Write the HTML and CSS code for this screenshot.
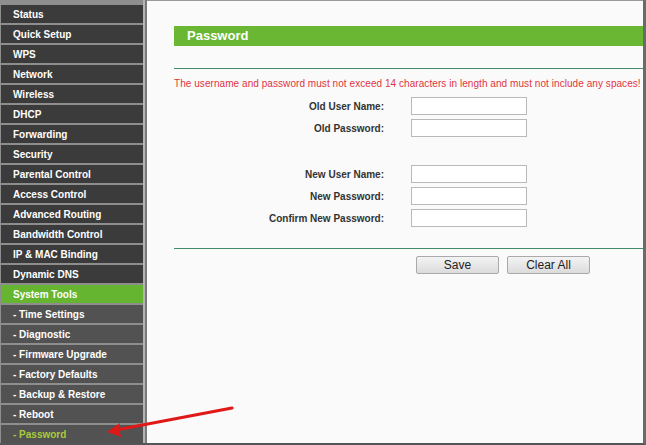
FILE: index.html
```html
<!DOCTYPE html>
<html lang="en">
  <head>
    <meta charset="UTF-8" />
    <title>Password</title>
    <link rel="stylesheet" href="styles.css">
  </head>
  <body>
    <div class="frame">
      <ul class="menu">
        <li class="item">Status</li>
        <li class="item">Quick Setup</li>
        <li class="item">WPS</li>
        <li class="item">Network</li>
        <li class="item">Wireless</li>
        <li class="item">DHCP</li>
        <li class="item">Forwarding</li>
        <li class="item">Security</li>
        <li class="item">Parental Control</li>
        <li class="item">Access Control</li>
        <li class="item">Advanced Routing</li>
        <li class="item">Bandwidth Control</li>
        <li class="item">IP &amp; MAC Binding</li>
        <li class="item">Dynamic DNS</li>
        <li class="item active">System Tools</li>
        <li class="item sub">- Time Settings</li>
        <li class="item sub">- Diagnostic</li>
        <li class="item sub">- Firmware Upgrade</li>
        <li class="item sub">- Factory Defaults</li>
        <li class="item sub">- Backup &amp; Restore</li>
        <li class="item sub">- Reboot</li>
        <li class="item sub current">- Password</li>
      </ul>

      <div class="main">
        <div class="title-bar">Password</div>
        <div class="rule"></div>
        <p class="warning">The username and password must not exceed 14 characters in length and must not include any spaces!</p>

        <div class="form">
          <label class="label">Old User Name:</label>
          <input class="field" type="text">
          <label class="label">Old Password:</label>
          <input class="field" type="password">
          <div class="spacer"></div>
          <label class="label">New User Name:</label>
          <input class="field" type="text">
          <label class="label">New Password:</label>
          <input class="field" type="password">
          <label class="label">Confirm New Password:</label>
          <input class="field" type="password">
        </div>

        <div class="rule rule-bottom"></div>
        <div class="buttons">
          <button class="btn">Save</button>
          <button class="btn">Clear All</button>
        </div>
      </div>

      <svg class="arrow" width="646" height="445" viewBox="0 0 646 445">
        <path d="M232 408 L116 430" stroke="#e01818" stroke-width="3.2" stroke-linecap="round" fill="none"/>
        <path d="M107 432 L120 423 L118 430 L122 437 Z" fill="#e01818"/>
      </svg>
    </div>
  </body>
</html>
```

FILE: styles.css
```css
* {
  margin: 0;
  padding: 0;
  box-sizing: border-box;
}

body {
  background: #fafafa;
  font-family: "Liberation Sans", Arial, sans-serif;
}

.frame {
  position: relative;
  width: 646px;
  height: 445px;
  display: flex;
  overflow: hidden;
  border-bottom: 2px solid #555;
  border-right: 3px solid #6a6a6a;
}

.menu {
  list-style: none;
  width: 147px;
  flex-shrink: 0;
  background: #8e8e8e;
  padding: 5px 0 0 1px;
  border-right: 2px solid #7a7a7a;
  box-shadow: inset -2px 0 0 #b4b4b4;
}

.item {
  width: 142px;
  height: 18px;
  margin-bottom: 2px;
  background: #3b3b3b;
  color: #fff;
  font-size: 10px;
  font-weight: bold;
  line-height: 19px;
  padding-left: 12px;
  white-space: nowrap;
}

.item.active {
  background: #66b530;
}

.item.sub {
  background: #525252;
}

.item.current {
  color: #a8cc3a;
}

.main {
  flex: 1;
  background: #fafafa;
  border-top: 1px solid #9a9a9a;
  padding: 25px 0 0 27px;
}

.title-bar {
  height: 20px;
  background: #69b733;
  color: #fff;
  font-size: 13px;
  font-weight: bold;
  line-height: 20px;
  padding-left: 13px;
}

.rule {
  height: 1px;
  background: #3f8c6a;
  margin-top: 22px;
}

.warning {
  color: #e2343e;
  font-size: 10px;
  letter-spacing: 0.06px;
  line-height: 12px;
  margin-top: 9px;
  white-space: nowrap;
}

.form {
  display: grid;
  grid-template-columns: 210px 116px;
  grid-template-rows: 22px 22px 24px 22px 22px 22px;
  column-gap: 27px;
  align-items: center;
  margin-top: 5px;
}

.spacer {
  grid-column: 1 / -1;
}

.label {
  text-align: right;
  font-size: 10px;
  font-weight: bold;
  color: #333;
}

.field {
  height: 18px;
  width: 116px;
  border: 1px solid #b9b9b9;
  background: #fff;
}

.rule-bottom {
  margin-top: 19px;
}

.buttons {
  display: flex;
  gap: 8px;
  margin: 7px 0 0 242px;
}

.btn {
  width: 83px;
  height: 18px;
  border: 1px solid #a9a9a9;
  border-radius: 2px;
  background: linear-gradient(#f4f4f4, #dcdcdc);
  font-family: "Liberation Sans", Arial, sans-serif;
  font-size: 12px;
  color: #222;
}

.arrow {
  position: absolute;
  left: 0;
  top: 0;
  pointer-events: none;
}
```
